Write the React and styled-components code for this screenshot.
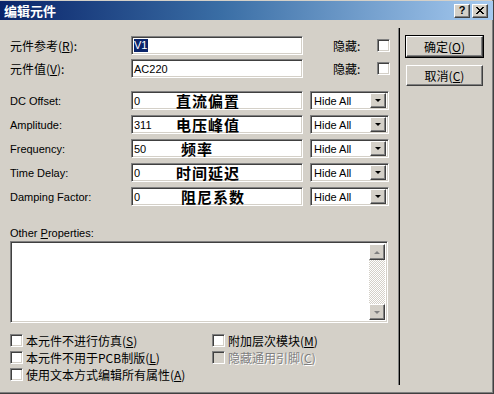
import React from "react";
import styled, { createGlobalStyle } from "styled-components";

const GlobalStyle = createGlobalStyle`
  html, body { margin: 0; padding: 0; background: #D4D0C8; }
  body {
    font-family: "Liberation Sans", Arial, "Noto Sans CJK SC", sans-serif;
    font-size: 11px; color: #000;
  }
`;

const cjk = `"Noto Sans CJK SC", "Liberation Sans", sans-serif`;

const Window = styled.div`
  width: 494px; height: 394px; box-sizing: border-box;
  background: #D4D0C8;
  padding-top: 1px;
  border-right: 1px solid #404040; border-bottom: 1px solid #404040;
  box-shadow: inset -1px -1px #808080;
  display: flex; flex-direction: column;
`;

const TitleBar = styled.div`
  height: 19px; flex: none;
  background: linear-gradient(to right, #0A246A 0%, #3A6EA5 45%, #A6CAF0 100%);
  display: flex; align-items: center; padding: 0 5px 0 4px;
`;

const Title = styled.div`
  flex: 1; color: #fff; font-family: ${cjk}; font-weight: 700; font-size: 13px; line-height: 19px;
`;

const CaptionButton = styled.div`
  width: 16px; height: 14px; box-sizing: border-box; margin-left: ${p => p.$gap || 0}px;
  background: #D4D0C8;
  border: 1px solid; border-color: #fff #404040 #404040 #fff;
  box-shadow: inset -1px -1px #808080;
  display: flex; align-items: center; justify-content: center;
  font: bold 11px "Liberation Sans", Arial, sans-serif; line-height: 1;
`;

const Body = styled.div`
  flex: 1; display: flex;
`;

const Main = styled.div`
  width: 398px; flex: none; box-sizing: border-box;
  padding: 16px 0 0 10px;
  display: flex; flex-direction: column;
`;

const Separator = styled.div`
  width: 1px; flex: none; background: #000; border-left: 1px solid #808080;
  margin: 8px 0 8px;
`;

const Side = styled.div`
  flex: 1; display: flex; flex-direction: column; gap: 6px;
  padding: 15px 0 0 5px;
`;

const Rows = styled.div`
  display: flex; flex-direction: column; gap: ${p => p.$gap}px;
  margin-bottom: ${p => p.$after || 0}px;
`;

const Row = styled.div`
  display: flex; align-items: center; height: 19px;
`;

const Label = styled.div`
  width: 121px; flex: none;
  font-family: ${p => (p.$cjk ? cjk : `"Liberation Sans", Arial, sans-serif`)};
  font-size: ${p => (p.$cjk ? 12 : 11)}px;
  u { text-decoration: underline; }
`;

const sunken = `
  box-sizing: border-box;
  border: 1px solid; border-color: #808080 #fff #fff #808080;
  box-shadow: inset 1px 1px #404040, inset -1px -1px #D4D0C8;
`;

const raised = `
  box-sizing: border-box;
  border: 1px solid; border-color: #fff #404040 #404040 #fff;
  box-shadow: inset -1px -1px #808080;
  background: #D4D0C8;
`;

const TextBox = styled.div`
  ${sunken}
  width: 172px; height: 19px; background: #fff;
  display: flex; align-items: center; padding-left: 2px;
  font-size: 11px; white-space: nowrap; overflow: hidden;
`;

const Selected = styled.span`
  background: #0A246A; color: #fff; padding: 0 1px 0 0; line-height: 13px;
`;

const Value = styled.span`
  width: ${p => p.$indent}px; flex: none;
`;

const Note = styled.span`
  font-family: ${cjk}; font-weight: 700; font-size: 15px; line-height: 17px; letter-spacing: 1px;
`;

const HideLabel = styled.div`
  margin-left: 30px; width: 44px; font-family: ${cjk}; font-size: 12px;
`;

const Check = styled.div`
  ${sunken}
  width: 13px; height: 13px; flex: none;
  background: ${p => (p.$disabled ? "#D4D0C8" : "#fff")};
`;

const Select = styled.div`
  ${sunken}
  margin-left: 7px; width: 79px; height: 19px; background: #fff;
  display: flex; align-items: center; padding: 2px 2px 2px 3px; gap: 2px;
`;

const SelectText = styled.span`
  flex: 1; font-size: 11px;
`;

const DropButton = styled.div`
  ${raised}
  width: 16px; height: 15px;
  display: flex; align-items: center; justify-content: center;
`;

const Arrow = styled.div`
  width: 0; height: 0;
  border-left: ${p => p.$size}px solid transparent; border-right: ${p => p.$size}px solid transparent;
  ${p => (p.$up ? "border-bottom" : "border-top")}: ${p => p.$size}px solid ${p => p.$color};
`;

const SectionLabel = styled.div`
  height: 14px; margin: 0 0 1px; font-size: 11px; line-height: 14px;
`;

const TextArea = styled.div`
  ${sunken}
  width: 378px; height: 82px; background: #fff;
  display: flex; justify-content: flex-end; padding: 2px;
`;

const ScrollBar = styled.div`
  width: 16px; display: flex; flex-direction: column; justify-content: space-between;
  background: repeating-conic-gradient(#fff 0 25%, #D4D0C8 0 50%) 0 0 / 2px 2px;
`;

const ScrollButton = styled.div`
  ${raised}
  width: 16px; height: 16px;
  display: flex; align-items: center; justify-content: center;
`;

const Options = styled.div`
  display: grid; grid-template-columns: 202px 1fr; row-gap: 4px;
  margin-top: 11px;
`;

const Option = styled.div`
  display: flex; align-items: center; gap: 3px; height: 13px;
  font-family: ${cjk}; font-size: 12px;
  color: ${p => (p.$disabled ? "#808080" : "#000")};
  text-shadow: ${p => (p.$disabled ? "1px 1px #fff" : "none")};
`;

const Button = styled.div`
  width: 79px; height: 23px; box-sizing: border-box;
  background: #D4D0C8;
  border: 1px solid ${p => (p.$default ? "#000" : "transparent")};
  display: flex;
  font-family: ${cjk}; font-size: 12px;
`;

const ButtonFace = styled.div`
  flex: 1; ${raised}
  display: flex; align-items: center; justify-content: center;
`;

const params = [
  { label: "DC Offset:", value: "0", note: "直流偏置", indent: 42 },
  { label: "Amplitude:", value: "311", note: "电压峰值", indent: 42 },
  { label: "Frequency:", value: "50", note: "频率", indent: 47 },
  { label: "Time Delay:", value: "0", note: "时间延迟", indent: 42 },
  { label: "Damping Factor:", value: "0", note: "阻尼系数", indent: 47 },
];

const options = [
  { text: <>本元件不进行仿真(<u>S</u>)</> },
  { text: <>附加层次模块(<u>M</u>)</> },
  { text: <>本元件不用于PCB制版(<u>L</u>)</> },
  { text: <>隐藏通用引脚(<u>C</u>)</>, disabled: true },
  { text: <>使用文本方式编辑所有属性(<u>A</u>)</> },
];

export default function App() {
  return (
    <>
      <GlobalStyle />
      <Window>
        <TitleBar>
          <Title>编辑元件</Title>
          <CaptionButton>?</CaptionButton>
          <CaptionButton $gap={2}>
            <svg width="8" height="7" viewBox="0 0 8 7">
              <path d="M0 0 L7 7 M1 0 L8 7 M7 0 L0 7 M8 0 L1 7" stroke="#000" strokeWidth="1" />
            </svg>
          </CaptionButton>
        </TitleBar>
        <Body>
          <Main>
            <Rows $gap={4} $after={13}>
              <Row>
                <Label $cjk>元件参考(<u>R</u>):</Label>
                <TextBox><Selected>V1</Selected></TextBox>
                <HideLabel>隐藏:</HideLabel>
                <Check />
              </Row>
              <Row>
                <Label $cjk>元件值(<u>V</u>):</Label>
                <TextBox>AC220</TextBox>
                <HideLabel>隐藏:</HideLabel>
                <Check />
              </Row>
            </Rows>
            <Rows $gap={5} $after={20}>
              {params.map(p => (
                <Row key={p.label}>
                  <Label>{p.label}</Label>
                  <TextBox>
                    <Value $indent={p.indent}>{p.value}</Value>
                    <Note>{p.note}</Note>
                  </TextBox>
                  <Select>
                    <SelectText>Hide All</SelectText>
                    <DropButton><Arrow $size={3} $color="#000" /></DropButton>
                  </Select>
                </Row>
              ))}
            </Rows>
            <SectionLabel>Other <u>P</u>roperties:</SectionLabel>
            <TextArea>
              <ScrollBar>
                <ScrollButton><Arrow $up $size={3} $color="#808080" /></ScrollButton>
                <ScrollButton><Arrow $size={3} $color="#808080" /></ScrollButton>
              </ScrollBar>
            </TextArea>
            <Options>
              {options.map((o, i) => (
                <Option key={i} $disabled={o.disabled}>
                  <Check $disabled={o.disabled} />
                  <span>{o.text}</span>
                </Option>
              ))}
            </Options>
          </Main>
          <Separator />
          <Side>
            <Button $default><ButtonFace>确定(<u>O</u>)</ButtonFace></Button>
            <Button><ButtonFace>取消(<u>C</u>)</ButtonFace></Button>
          </Side>
        </Body>
      </Window>
    </>
  );
}
